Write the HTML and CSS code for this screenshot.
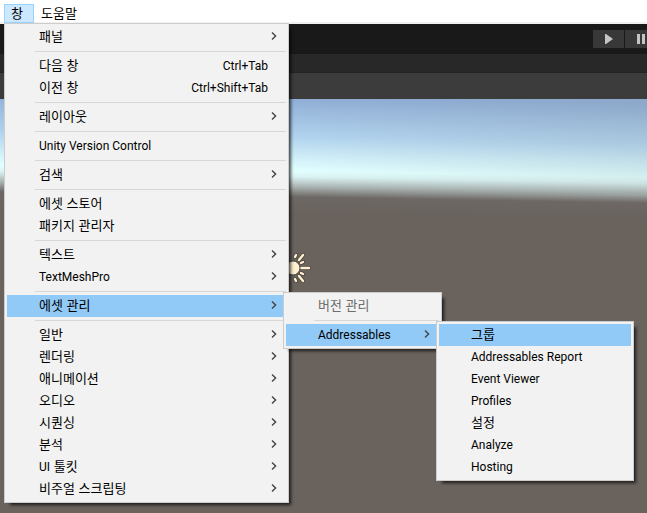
FILE: index.html
```html
<!DOCTYPE html>
<html lang="ko">
<head>
<meta charset="utf-8">
<title>Unity</title>
<link rel="stylesheet" href="styles.css">
</head>
<body>
<svg class="defs" aria-hidden="true"><symbol id="chevron" viewBox="0 0 6 8"><path d="M1 .6 4.6 4 1 7.4" fill="none" stroke="#444" stroke-width="1.4"/></symbol></svg>
<nav class="menubar">
  <div class="menubar-entry">
    <button class="menubar-button open" type="button">창</button>
    <ul class="menu menu-window">
      <li><button type="button">패널<svg class="chevron"><use href="#chevron"/></svg></button></li>
      <li class="separator"></li>
      <li><button type="button">다음 창<span class="shortcut latin">Ctrl+Tab</span></button></li>
      <li><button type="button">이전 창<span class="shortcut latin">Ctrl+Shift+Tab</span></button></li>
      <li class="separator"></li>
      <li><button type="button">레이아웃<svg class="chevron"><use href="#chevron"/></svg></button></li>
      <li class="separator"></li>
      <li><button class="latin" type="button">Unity Version Control</button></li>
      <li class="separator"></li>
      <li><button type="button">검색<svg class="chevron"><use href="#chevron"/></svg></button></li>
      <li class="separator"></li>
      <li><button type="button">에셋 스토어</button></li>
      <li><button type="button">패키지 관리자</button></li>
      <li class="separator"></li>
      <li><button type="button">텍스트<svg class="chevron"><use href="#chevron"/></svg></button></li>
      <li><button class="latin" type="button">TextMeshPro<svg class="chevron"><use href="#chevron"/></svg></button></li>
      <li class="separator"></li>
      <li>
        <button class="active" type="button">에셋 관리<svg class="chevron"><use href="#chevron"/></svg></button>
        <ul class="menu submenu menu-assets">
          <li><button type="button" disabled>버전 관리</button></li>
          <li class="separator"></li>
          <li>
            <button class="latin active" type="button">Addressables<svg class="chevron"><use href="#chevron"/></svg></button>
            <ul class="menu submenu menu-addressables">
              <li><button class="active" type="button">그룹</button></li>
              <li><button class="latin" type="button">Addressables Report</button></li>
              <li><button class="latin" type="button">Event Viewer</button></li>
              <li><button class="latin" type="button">Profiles</button></li>
              <li><button type="button">설정</button></li>
              <li><button class="latin" type="button">Analyze</button></li>
              <li><button class="latin" type="button">Hosting</button></li>
            </ul>
          </li>
        </ul>
      </li>
      <li class="separator"></li>
      <li><button type="button">일반<svg class="chevron"><use href="#chevron"/></svg></button></li>
      <li><button type="button">렌더링<svg class="chevron"><use href="#chevron"/></svg></button></li>
      <li><button type="button">애니메이션<svg class="chevron"><use href="#chevron"/></svg></button></li>
      <li><button type="button">오디오<svg class="chevron"><use href="#chevron"/></svg></button></li>
      <li><button type="button">시퀀싱<svg class="chevron"><use href="#chevron"/></svg></button></li>
      <li><button type="button">분석<svg class="chevron"><use href="#chevron"/></svg></button></li>
      <li><button type="button"><span><span class="latin">UI</span> 툴킷</span><svg class="chevron"><use href="#chevron"/></svg></button></li>
      <li><button type="button">비주얼 스크립팅<svg class="chevron"><use href="#chevron"/></svg></button></li>
    </ul>
  </div>
  <div class="menubar-entry"><button class="menubar-button" type="button">도움말</button></div>
</nav>
<div class="toolbar">
  <button class="tool" type="button" aria-label="Play"><svg width="8" height="10" viewBox="0 0 8 10"><path d="M0 0h1l7 5-7 5H0z" fill="#c4c4c4"/></svg></button>
  <button class="tool tool-pause" type="button" aria-label="Pause"><svg width="10" height="10" viewBox="0 0 10 10"><path d="M0 0h3v10H0zM5 0h3v10H5z" fill="#c4c4c4"/></svg></button>
</div>
<div class="tabs"></div>
<div class="scene-tools"></div>
<main class="scene">
  <svg class="sun" width="46" height="46" viewBox="-23 -23 46 46" aria-label="Directional Light">
    <g stroke-linecap="round" fill="none">
      <path d="M8 0H16M8 5 10 6M6 8 10 13M2 11 3 13M8-5 10-6M6-8 10-13M2-11 3-13" stroke="#4a4540" stroke-width="4"/>
      <path d="M8 0H16M8 5 10 6M6 8 10 13M2 11 3 13M8-5 10-6M6-8 10-13M2-11 3-13" stroke="#fff0cf" stroke-width="2.400"/>
    </g>
    <circle r="7" fill="#fff0cf" stroke="#4a4540"/>
  </svg>
</main>
</body>
</html>
```
FILE: styles.css
```css
* { box-sizing: border-box; }

body {
  margin: 0;
  height: 100vh;
  display: flex;
  flex-direction: column;
  overflow: hidden;
  font: 13px/20px "Noto Sans CJK KR", sans-serif;
  color: #000;
}

button {
  font: inherit;
  color: inherit;
  border: 0;
  background: none;
  padding: 0;
}

.defs { position: absolute; width: 0; height: 0; }

.menubar {
  flex: none;
  display: flex;
  height: 24px;
  padding: 4px 4px 0;
  background: #fff;
  border-bottom: 2px solid #f0f0f0;
}

.menubar-entry { position: relative; }

.menubar-button {
  display: flex;
  align-items: center;
  height: 19px;
  padding: 0 7px 2px;
}

.menubar-button.open {
  width: 30px;
  padding: 0 6px 2px;
  border: 1px solid #99d1ff;
  background: #cce8ff;
}

.menu {
  position: absolute;
  z-index: 1;
  margin: 0;
  padding: 2px;
  list-style: none;
  border: 1px solid #ccc;
  background: #f2f2f2;
  box-shadow: 4px 4px 3px -2px rgba(0, 0, 0, .7);
}

.menu-window { top: 19px; left: 0; width: 285px; }
.menu-assets { width: 159px; }
.menu-addressables { width: 198px; }

.menu li { position: relative; }

.submenu { top: -3px; left: calc(100% - 3px); }

.menu button {
  display: flex;
  align-items: center;
  width: 100%;
  height: 22px;
  padding: 0 18px 2px 32px;
  white-space: nowrap;
  text-align: left;
}

.menu .latin {
  font-family: Roboto, "Noto Sans CJK KR", sans-serif;
  font-size: 12px;
}

.menu button.latin { padding-bottom: 0; }

.menu button.active { background: #91c9f7; }
.menu button:disabled { color: #6d6d6d; }

.separator {
  height: 1px;
  margin: 3px 0 3px 28px;
  background: #d7d7d7;
}

.shortcut { margin-left: auto; padding-top: 2px; }

.chevron {
  width: 6px;
  height: 8px;
  margin: 0 -9px 0 auto;
}

.latin .chevron { margin-bottom: 2px; }

.toolbar {
  flex: none;
  display: flex;
  justify-content: flex-end;
  gap: 1px;
  height: 30px;
  padding: 6px 0;
  background: #191919;
}

.tool {
  display: flex;
  align-items: center;
  justify-content: center;
  width: 31px;
  background: #383838;
}

.tool-pause { width: 22px; justify-content: flex-end; }

.tabs {
  flex: none;
  height: 19px;
  background: #282828;
  border-bottom: 1px solid #232323;
}

.scene-tools {
  flex: none;
  height: 26px;
  background: #3c3c3c;
}

.scene {
  position: relative;
  flex: 1;
  background:
    linear-gradient(90deg, transparent 45%, rgba(130, 140, 140, .14)) 0 0 / 100% 95px no-repeat,
    linear-gradient(181deg, #8fadd5 5px, #b2d4ee 45px, #ccebf7 62px, #e2ffff 78px, #daf2f2 84px, #a9b3b1 94px, #6d6865 104px, #69625d 122px);
}

.sun { position: absolute; top: 146px; left: 270px; }
```
